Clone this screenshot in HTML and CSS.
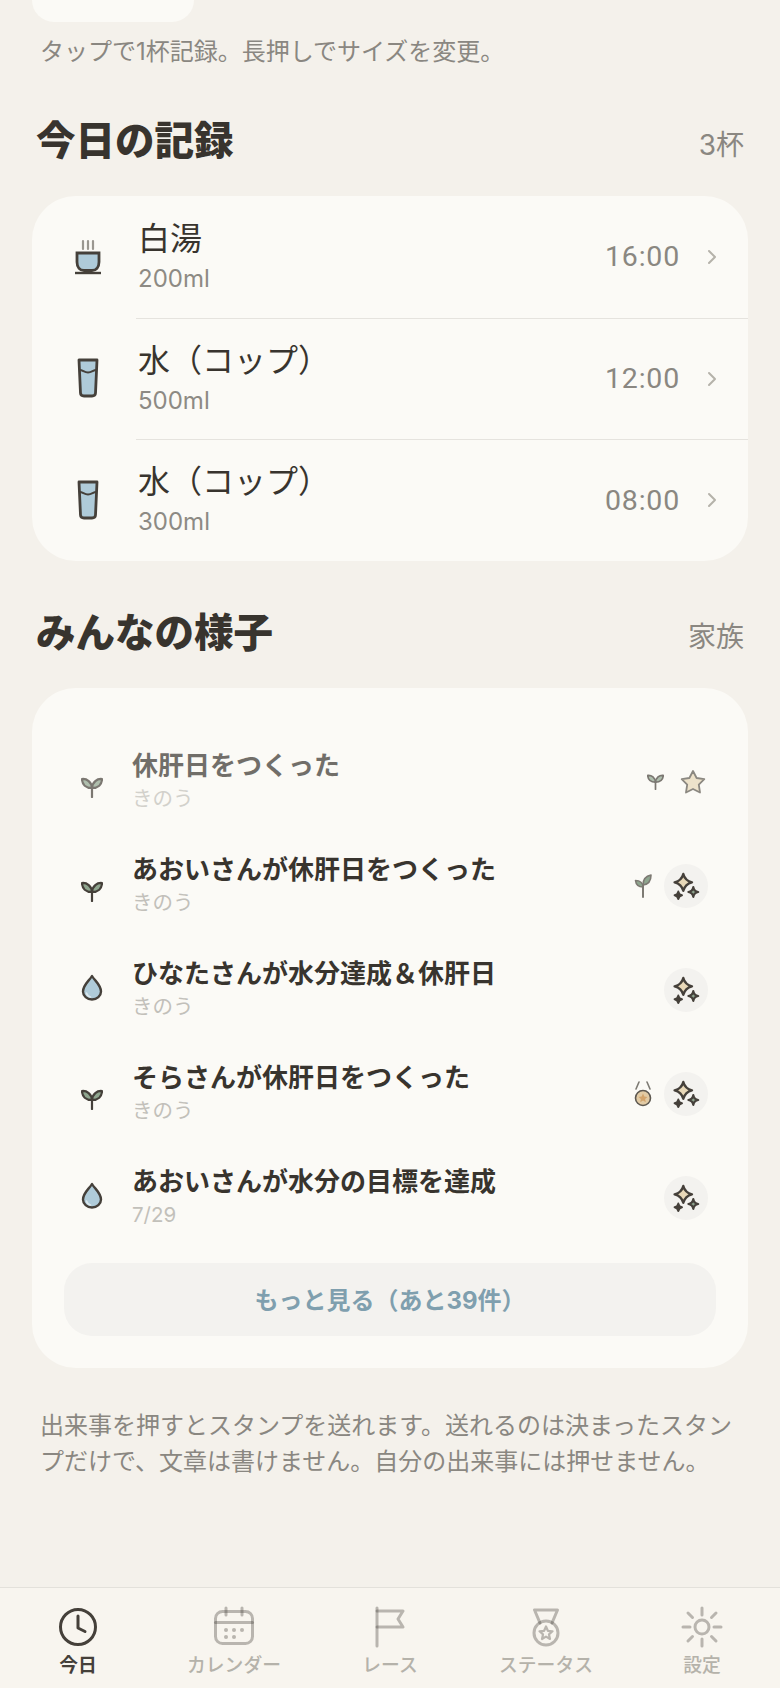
FILE: index.html
```html
<!DOCTYPE html>
<html lang="ja">
<head>
    <meta charset="UTF-8">
    <meta name="viewport" content="width=device-width, initial-scale=1.0">
    <title>今日</title>
    <link rel="stylesheet" href="styles.css">
</head>
<body>
    <svg class="defs" xmlns="http://www.w3.org/2000/svg">
        <symbol id="sprout" viewBox="0 0 22 22">
            <path d="M11 21V11" fill="none" stroke="currentColor" stroke-width="2.200" stroke-linecap="round"/>
            <path d="M11 12C10.500 6 6 2.500 1 3C1 8.500 5 12 11 12Z" fill="#8fa68f" stroke="currentColor" stroke-width="2.200" stroke-linejoin="round"/>
            <path d="M11 12C11.500 6 16 2.500 21 3C21 8.500 17 12 11 12Z" fill="#8fa68f" stroke="currentColor" stroke-width="2.200" stroke-linejoin="round"/>
        </symbol>
        <symbol id="drop" viewBox="0 0 22 27">
            <path d="M11 2C8 7 2 11 2 17.500A9 8 0 0 0 20 17.500C20 11 14 7 11 2Z" fill="#afcbd9" stroke="#45403a" stroke-width="2.400" stroke-linejoin="round"/>
            <path d="M5.500 19C6 21 7.500 22.500 9.500 23" fill="none" stroke="#dbe8ee" stroke-width="1.600" stroke-linecap="round"/>
        </symbol>
        <symbol id="sparkle" viewBox="0 0 44 44">
            <path d="M19.300 10Q21 16.600 28 18.300Q21 20 19.300 26.800Q17.600 20 10.600 18.300Q17.600 16.600 19.300 10Z" fill="#e8d8b8" stroke="#45403a" stroke-width="2.400" stroke-linejoin="round"/>
            <path d="M29.300 23.200Q30 27.300 34.200 28Q30 28.700 29.300 32.800Q28.600 28.700 24.400 28Q28.600 27.300 29.300 23.200Z" fill="#8fa68f" stroke="#45403a" stroke-width="2.200" stroke-linejoin="round"/>
            <path d="M14.300 27.600Q14.900 30.700 18 31.300Q14.900 31.900 14.300 35Q13.700 31.900 10.600 31.300Q13.700 30.700 14.300 27.600Z" fill="#45403a" stroke="#45403a" stroke-width="2" stroke-linejoin="round"/>
        </symbol>
        <symbol id="glass" viewBox="0 0 24 40">
            <path d="M3 2H21L19.500 35C19.400 37 18 38 16 38H8C6 38 4.600 37 4.500 35Z" fill="#afcbd9" stroke="#45403a" stroke-width="2.800" stroke-linejoin="round"/>
            <path d="M3.500 12C7 12 8 14.500 12 14.500C16 14.500 17 12 20.500 12" fill="none" stroke="#45403a" stroke-width="2"/>
        </symbol>
    </svg>

    <main class="content">
        <div class="quick-card"></div>
        <p class="hint">タップで1杯記録。長押しでサイズを変更。</p>

        <section class="today">
            <div class="section-head">
                <h2>今日の記録</h2>
                <span class="section-note">3杯</span>
            </div>
            <div class="card log-card">
                <div class="log-row">
                    <svg class="log-icon" width="32" height="36" viewBox="0 0 32 36">
                        <path d="M11 2V10M16 2V10M21 2V10" fill="none" stroke="#9a9790" stroke-width="2.200" stroke-linecap="round"/>
                        <path d="M5 14H27V23C27 28.500 24 31.500 20 31.500H12C8 31.500 5 28.500 5 23Z" fill="#afcbd9" stroke="#45403a" stroke-width="2.800"/>
                        <path d="M3 34H29" fill="none" stroke="#45403a" stroke-width="2.400"/>
                    </svg>
                    <div class="log-body">
                        <div class="log-text">
                            <div class="log-name">白湯</div>
                            <div class="log-size">200ml</div>
                        </div>
                        <span class="log-time">16:00</span>
                        <svg class="chevron" width="10" height="16" viewBox="0 0 10 16"><path d="M2 2L8 8L2 14" fill="none" stroke="#b5b2aa" stroke-width="2" stroke-linecap="round" stroke-linejoin="round"/></svg>
                    </div>
                </div>
                <div class="log-row">
                    <svg class="log-icon" width="24" height="40"><use href="#glass"/></svg>
                    <div class="log-body">
                        <div class="log-text">
                            <div class="log-name">水（コップ）</div>
                            <div class="log-size">500ml</div>
                        </div>
                        <span class="log-time">12:00</span>
                        <svg class="chevron" width="10" height="16" viewBox="0 0 10 16"><path d="M2 2L8 8L2 14" fill="none" stroke="#b5b2aa" stroke-width="2" stroke-linecap="round" stroke-linejoin="round"/></svg>
                    </div>
                </div>
                <div class="log-row">
                    <svg class="log-icon" width="24" height="40"><use href="#glass"/></svg>
                    <div class="log-body">
                        <div class="log-text">
                            <div class="log-name">水（コップ）</div>
                            <div class="log-size">300ml</div>
                        </div>
                        <span class="log-time">08:00</span>
                        <svg class="chevron" width="10" height="16" viewBox="0 0 10 16"><path d="M2 2L8 8L2 14" fill="none" stroke="#b5b2aa" stroke-width="2" stroke-linecap="round" stroke-linejoin="round"/></svg>
                    </div>
                </div>
            </div>
        </section>

        <section class="family">
            <div class="section-head">
                <h2>みんなの様子</h2>
                <span class="section-note">家族</span>
            </div>
            <div class="card feed-card">
                <div class="feed-row own">
                    <div class="feed-icon"><svg class="ink sprout-icon" width="22" height="22"><use href="#sprout"/></svg></div>
                    <div class="feed-text">
                        <div class="feed-title">休肝日をつくった</div>
                        <div class="feed-when">きのう</div>
                    </div>
                    <div class="feed-side">
                        <svg class="ink small-sprout" width="17" height="17"><use href="#sprout"/></svg>
                        <svg class="own-star" width="26" height="26" viewBox="0 0 26 26"><path d="M13 2L16.600 9L24.300 10.200L18.800 15.700L20 23.500L13 20L6 23.500L7.200 15.700L1.700 10.200L9.400 9Z" fill="#e8d8b8" stroke="#5d5850" stroke-width="1.800" stroke-linejoin="round"/></svg>
                    </div>
                </div>
                <div class="feed-row">
                    <div class="feed-icon"><svg class="ink sprout-icon" width="22" height="22"><use href="#sprout"/></svg></div>
                    <div class="feed-text">
                        <div class="feed-title">あおいさんが休肝日をつくった</div>
                        <div class="feed-when">きのう</div>
                    </div>
                    <div class="feed-side">
                        <svg class="side-icon" width="18" height="24" viewBox="0 0 18 24">
                            <path d="M9 23V11" fill="none" stroke="#7d7a73" stroke-width="2" stroke-linecap="round"/>
                            <path d="M9 13C9 9 6 6.500 1.500 6.500C2 11 5 13 9 13Z" fill="#8fa68f" stroke="#7d7a73" stroke-width="1.600" stroke-linejoin="round"/>
                            <path d="M9 11C9 5 12 2 17 1C17 7 14 10.500 9 11Z" fill="#8fa68f" stroke="#7d7a73" stroke-width="1.600" stroke-linejoin="round"/>
                        </svg>
                        <span class="stamp"><svg width="44" height="44"><use href="#sparkle"/></svg></span>
                    </div>
                </div>
                <div class="feed-row">
                    <div class="feed-icon"><svg class="drop-icon" width="22" height="27"><use href="#drop"/></svg></div>
                    <div class="feed-text">
                        <div class="feed-title">ひなたさんが水分達成＆休肝日</div>
                        <div class="feed-when">きのう</div>
                    </div>
                    <div class="feed-side">
                        <span class="stamp"><svg width="44" height="44"><use href="#sparkle"/></svg></span>
                    </div>
                </div>
                <div class="feed-row">
                    <div class="feed-icon"><svg class="ink sprout-icon" width="22" height="22"><use href="#sprout"/></svg></div>
                    <div class="feed-text">
                        <div class="feed-title">そらさんが休肝日をつくった</div>
                        <div class="feed-when">きのう</div>
                    </div>
                    <div class="feed-side">
                        <svg class="side-icon" width="18" height="26" viewBox="0 0 18 26">
                            <path d="M5 1L2 8M13 1L16 8" fill="none" stroke="#7d7a73" stroke-width="1.600" stroke-linecap="round"/>
                            <circle cx="9" cy="17" r="7.500" fill="#e2cba5" stroke="#5d5850" stroke-width="1.600"/>
                            <path d="M9 12.500L10.300 15.600L13.500 15.900L11.100 18L11.800 21.200L9 19.500L6.200 21.200L6.900 18L4.500 15.900L7.700 15.600Z" fill="#d3a46c"/>
                        </svg>
                        <span class="stamp"><svg width="44" height="44"><use href="#sparkle"/></svg></span>
                    </div>
                </div>
                <div class="feed-row">
                    <div class="feed-icon"><svg class="drop-icon" width="22" height="27"><use href="#drop"/></svg></div>
                    <div class="feed-text">
                        <div class="feed-title">あおいさんが水分の目標を達成</div>
                        <div class="feed-when">7/29</div>
                    </div>
                    <div class="feed-side">
                        <span class="stamp"><svg width="44" height="44"><use href="#sparkle"/></svg></span>
                    </div>
                </div>
                <button class="more-btn">もっと見る（あと39件）</button>
            </div>
        </section>

        <p class="footnote">出来事を押すとスタンプを送れます。送れるのは決まったスタンプだけで、文章は書けません。自分の出来事には押せません。</p>
    </main>

    <nav class="tabbar">
        <a class="tab active" href="#today">
            <svg width="44" height="44" viewBox="0 0 44 44" fill="none" stroke="#45403a" stroke-width="3" stroke-linecap="round" stroke-linejoin="round">
                <circle cx="22" cy="22" r="17.500"/>
                <path d="M22 11V23L29 26.500"/>
            </svg>
            <span>今日</span>
        </a>
        <a class="tab" href="#calendar">
            <svg width="44" height="44" viewBox="0 0 44 44" fill="none" stroke="#45403a" stroke-opacity=".35" stroke-width="3" stroke-linecap="round">
                <rect x="3.500" y="6.500" width="37" height="32" rx="7"/>
                <path d="M3.500 17.500H40.500"/>
                <path d="M14 3V10M30 3V10"/>
                <g fill="#45403a" fill-opacity=".35" stroke="none">
                    <circle cx="14" cy="25" r="2"/><circle cx="22" cy="25" r="2"/><circle cx="30" cy="25" r="2"/>
                    <circle cx="14" cy="32" r="2"/><circle cx="22" cy="32" r="2"/>
                </g>
            </svg>
            <span>カレンダー</span>
        </a>
        <a class="tab" href="#race">
            <svg width="44" height="44" viewBox="0 0 44 44" fill="none" stroke="#45403a" stroke-opacity=".35" stroke-width="3" stroke-linecap="round" stroke-linejoin="round">
                <path d="M9 3V41"/>
                <path d="M9 6H35L30 14L35 22H9"/>
            </svg>
            <span>レース</span>
        </a>
        <a class="tab" href="#status">
            <svg width="44" height="44" viewBox="0 0 44 44" fill="none" stroke="#45403a" stroke-opacity=".35" stroke-width="3" stroke-linecap="round" stroke-linejoin="round">
                <path d="M10.500 5H33.500L28 18M10.500 5L16 18"/>
                <circle cx="22" cy="28" r="12"/>
                <path d="M22 21.500L23.900 25.800L28.500 26.300L25 29.400L26 34L22 31.600L18 34L19 29.400L15.500 26.300L20.100 25.800Z" stroke-width="2.200"/>
            </svg>
            <span>ステータス</span>
        </a>
        <a class="tab" href="#settings">
            <svg width="44" height="44" viewBox="0 0 44 44" fill="none" stroke="#45403a" stroke-opacity=".35" stroke-width="3" stroke-linecap="round">
                <circle cx="22" cy="22" r="7"/>
                <path d="M22 3V10M22 34V41M3 22H10M34 22H41M8 8L12.500 12.500M31.500 31.500L36 36M36 8L31.500 12.500M12.500 31.500L8 36"/>
            </svg>
            <span>設定</span>
        </a>
    </nav>
</body>
</html>
```

FILE: styles.css
```css
* {
    box-sizing: border-box;
}
html, body {
    height: 100%;
}
body {
    font-family: Inter, "Noto Sans CJK JP", sans-serif;
    margin: 0;
    padding: 0;
    background-color: #f4f1eb;
    color: #38342e;
    display: flex;
    flex-direction: column;
    overflow: hidden;
}
.defs {
    display: none;
}
.content {
    flex: 1;
    padding: 0 32px;
}
.quick-card {
    width: 162px;
    height: 22px;
    background-color: #fbfaf6;
    border-radius: 0 0 32px 32px;
}
.hint {
    margin: 12px 8px 0;
    font-size: 24px;
    line-height: 36px;
    color: #8a8781;
}
.today {
    margin-top: 43px;
}
.family {
    margin-top: 44px;
}
.section-head {
    display: flex;
    justify-content: space-between;
    align-items: baseline;
    padding: 0 4px;
    height: 83px;
}
.section-head h2 {
    margin: 0;
    font-size: 39.500px;
    line-height: 56px;
    font-weight: 900;
}
.section-note {
    font-size: 28px;
    color: #8a8781;
}
.card {
    background-color: #fbfaf6;
    border-radius: 44px;
}
.log-card {
    overflow: hidden;
}
.log-row {
    display: flex;
    align-items: center;
    height: 121.500px;
}
.log-icon {
    width: 96px;
    margin-left: 8px;
    flex-shrink: 0;
}
.log-body {
    flex: 1;
    height: 100%;
    display: flex;
    align-items: center;
    padding-right: 31px;
    border-top: 1px solid #e5e3de;
}
.log-row:first-child .log-body {
    border-top: none;
}
.log-text {
    flex: 1;
    padding-left: 2px;
}
.log-name {
    font-size: 32px;
    line-height: 44px;
}
.log-size {
    font-size: 24px;
    line-height: 36px;
    color: #8d8a84;
}
.log-time {
    font-family: Roboto, sans-serif;
    font-size: 28.500px;
    letter-spacing: .8px;
    color: #8a8781;
    margin-right: 27px;
}
.feed-card {
    padding: 42px 32px 32px;
}
.feed-row {
    display: flex;
    align-items: center;
    height: 104px;
    padding-right: 8px;
}
.feed-row.own {
    opacity: .7;
}
.feed-icon {
    width: 56px;
    flex-shrink: 0;
    display: flex;
    justify-content: center;
}
.sprout-icon {
    margin-top: 10px;
}
.drop-icon {
    margin-bottom: 5px;
}
.ink {
    color: #45403a;
}
.feed-text {
    flex: 1;
    padding-left: 12px;
    padding-bottom: 2px;
}
.feed-title {
    font-size: 26px;
    line-height: 36px;
    font-weight: 700;
}
.feed-when {
    font-size: 20.500px;
    line-height: 30px;
    color: #c2c0ba;
}
.feed-side {
    display: flex;
    align-items: center;
    gap: 12px;
}
.small-sprout {
    margin-right: 4px;
}
.own-star {
    margin-right: 2px;
}
.stamp {
    width: 44px;
    height: 44px;
    border-radius: 50%;
    background-color: #f3f2ef;
    display: block;
}
.stamp svg {
    display: block;
}
.more-btn {
    display: block;
    width: 100%;
    height: 73px;
    margin-top: 13px;
    padding-bottom: 2px;
    border: none;
    border-radius: 28px;
    background-color: #f3f2ef;
    color: #7f9fae;
    font-family: inherit;
    font-size: 24px;
    font-weight: 700;
}
.footnote {
    margin: 40px 8px 0;
    font-size: 24px;
    line-height: 36px;
    color: #8a8781;
}
.tabbar {
    display: flex;
    height: 101px;
    flex-shrink: 0;
    background-color: #f8f5ef;
    border-top: 1px solid #e3e1db;
}
.tab {
    flex: 1;
    display: flex;
    flex-direction: column;
    align-items: center;
    padding-top: 17px;
    text-decoration: none;
    color: #b5b2aa;
    font-size: 18.800px;
    font-weight: 500;
}
.tab svg {
    display: block;
}
.tab span {
    line-height: 28px;
    margin-top: 3px;
}
.tab.active {
    color: #45403a;
    font-weight: 700;
}
```
